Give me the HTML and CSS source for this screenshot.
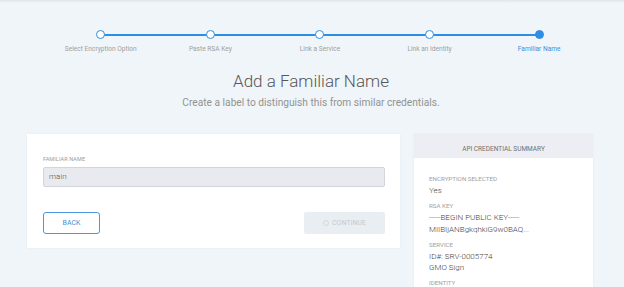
FILE: index.html
```html
<!DOCTYPE html>
<html>
<head>
<meta charset="utf-8">
<link rel="stylesheet" href="styles.css">
</head>
<body>
<div class="topbar"></div>
<div class="stepper">
  <div class="track"></div>
  <div class="step"><span class="dot"></span><span class="label">Select Encryption Option</span></div>
  <div class="step"><span class="dot"></span><span class="label">Paste RSA Key</span></div>
  <div class="step"><span class="dot"></span><span class="label">Link a Service</span></div>
  <div class="step"><span class="dot"></span><span class="label">Link an Identity</span></div>
  <div class="step active"><span class="dot"></span><span class="label">Familiar Name</span></div>
</div>
<div class="heading">
  <h1 class="title">Add a Familiar Name</h1>
  <p class="subtitle">Create a label to distinguish this from similar credentials.</p>
</div>
<div class="cards">
  <div class="card form-card">
    <div class="field-label">FAMILIAR NAME</div>
    <div class="input">main</div>
    <div class="actions">
      <button class="btn back">BACK</button>
      <button class="btn continue"><span class="spin"></span>CONTINUE</button>
    </div>
  </div>
  <div class="card summary">
    <div class="summary-head">API CREDENTIAL SUMMARY</div>
    <div class="summary-body">
      <div class="s-label">ENCRYPTION SELECTED</div>
      <div class="s-val">Yes</div>
      <div class="s-label">RSA KEY</div>
      <div class="s-val">-----BEGIN PUBLIC KEY-----<br>MIIBIjANBgkqhkiG9w0BAQ...</div>
      <div class="s-label">SERVICE</div>
      <div class="s-val">ID#: SRV-0005774<br>GMO Sign</div>
      <div class="s-label">IDENTITY</div>
    </div>
  </div>
</div>
</body>
</html>
```
FILE: styles.css
```css
html, body {
  margin: 0;
  padding: 0;
  height: 100%;
  overflow: hidden;
}
body {
  background: #f0f5f9;
  font-family: Roboto, "Liberation Sans", sans-serif;
  color: #555;
}
.topbar {
  height: 3px;
  background: linear-gradient(#dfe4e8, #f0f5f9);
}
.stepper {
  position: relative;
  display: flex;
  width: 548px;
  margin: 27px 0 0 46px;
}
.track {
  position: absolute;
  left: 55px;
  right: 55px;
  top: 4px;
  height: 1.5px;
  background: #2d8ee6;
}
.step {
  flex: 1;
  display: flex;
  flex-direction: column;
  align-items: center;
  position: relative;
}
.dot {
  width: 7px;
  height: 7px;
  border: 1.5px solid #2d8ee6;
  border-radius: 50%;
  background: #fff;
}
.active .dot {
  background: #2d8ee6;
}
.label {
  margin-top: 6px;
  font-size: 6.6px;
  color: #9e9e9e;
  white-space: nowrap;
}
.active .label {
  color: #3b8fdc;
}
.heading {
  text-align: center;
  margin-left: -2px;
}
.title {
  margin: 17px 0 0;
  font-size: 17px;
  font-weight: 300;
  color: #575757;
  line-height: 22px;
}
.subtitle {
  margin: 3px 0 0;
  font-size: 10.2px;
  font-weight: 400;
  color: #929292;
  line-height: 16px;
}
.cards {
  display: flex;
  align-items: flex-start;
  gap: 14px;
  margin: 23px 0 0 27px;
}
.card {
  background: #fff;
  box-shadow: 0 0 2px rgba(0,0,0,0.06);
}
.form-card {
  width: 373px;
  box-sizing: border-box;
  padding: 21px 15px 14px 16px;
}
.field-label {
  font-size: 5.5px;
  color: #9a9a9a;
  letter-spacing: 0.1px;
  line-height: 8px;
}
.input {
  margin-top: 4px;
  height: 20px;
  box-sizing: border-box;
  border: 1px solid #d2d5db;
  border-radius: 2px;
  background: #e9eaf0;
  font-size: 8px;
  font-weight: 300;
  color: #555;
  line-height: 18px;
  padding-left: 5px;
}
.actions {
  display: flex;
  justify-content: space-between;
  margin-top: 25px;
}
.btn {
  height: 22px;
  box-sizing: border-box;
  font-family: Roboto, "Liberation Sans", sans-serif;
  font-size: 7px;
  padding: 0;
  display: flex;
  align-items: center;
  justify-content: center;
}
.back {
  width: 57px;
  border: 1px solid #4a97e0;
  border-radius: 3px;
  background: #fff;
  color: #3b8fdc;
}
.continue {
  width: 81px;
  border: none;
  border-radius: 2px;
  background: #e9eef2;
  color: #c4c9cd;
}
.spin {
  width: 4px;
  height: 4px;
  border: 1px solid #d4d9dd;
  border-radius: 50%;
  margin-right: 3px;
}
.summary {
  width: 179px;
  height: 200px;
}
.summary-head {
  height: 24px;
  background: #edeef3;
  text-align: center;
  font-size: 6.5px;
  color: #707070;
  padding-top: 6px;
  box-sizing: border-box;
  line-height: 18px;
}
.summary-body {
  padding: 17px 15px 0;
}
.s-label {
  font-size: 6.2px;
  color: #a0a0a0;
  line-height: 8px;
}
.s-val {
  font-size: 8px;
  font-weight: 300;
  color: #444;
  line-height: 11.5px;
  margin: 2px 0 5.5px;
}
```
